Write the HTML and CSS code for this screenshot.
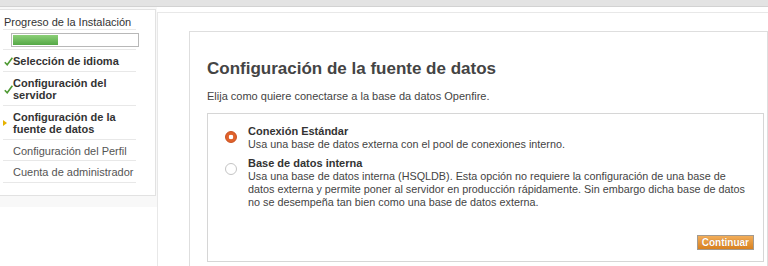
FILE: index.html
```html
<!DOCTYPE html>
<html lang="es">
<head>
    <meta charset="UTF-8">
    <meta name="viewport" content="width=device-width, initial-scale=1.0">
    <title>Openfire - Configuración</title>
    <link rel="stylesheet" href="styles.css">
</head>
<body>
    <div class="topbar"></div>

    <div class="layout">
        <div class="sidebar-wrap">
            <div class="sidebar">
                <h2 class="progress-title">Progreso de la Instalación</h2>
                <div class="progress-row">
                    <div class="progress"><div class="progress-fill" style="width: 36%"></div></div>
                </div>
                <ul class="steps">
                    <li class="step done">
                        <span class="step-icon"><svg width="9" height="9" viewBox="0 0 9 9"><path d="M0.8 5.2 L3.2 7.8 L8.4 0.8" fill="none" stroke="#4f9a34" stroke-width="1.6"/></svg></span>
                        <span>Selección de idioma</span>
                    </li>
                    <li class="step done">
                        <span class="step-icon"><svg width="9" height="9" viewBox="0 0 9 9"><path d="M0.8 5.2 L3.2 7.8 L8.4 0.8" fill="none" stroke="#4f9a34" stroke-width="1.6"/></svg></span>
                        <span>Configuración del servidor</span>
                    </li>
                    <li class="step current">
                        <span class="step-icon"><span class="arrow"></span></span>
                        <span>Configuración de la fuente de datos</span>
                    </li>
                    <li class="step">
                        <span class="step-icon"></span>
                        <span>Configuración del Perfil</span>
                    </li>
                    <li class="step">
                        <span class="step-icon"></span>
                        <span>Cuenta de administrador</span>
                    </li>
                </ul>
            </div>
        </div>

        <div class="main">
            <div class="panel">
                <h1>Configuración de la fuente de datos</h1>
                <p class="intro">Elija como quiere conectarse a la base da datos Openfire.</p>

                <form class="options" onsubmit="return false">
                    <label class="option">
                        <input type="radio" name="mode" value="standard" checked>
                        <span class="option-text">
                            <strong>Conexión Estándar</strong>
                            <span class="option-desc">Usa una base de datos externa con el pool de conexiones interno.</span>
                        </span>
                    </label>
                    <label class="option">
                        <input type="radio" name="mode" value="embedded">
                        <span class="option-text">
                            <strong>Base de datos interna</strong>
                            <span class="option-desc">Usa una base de datos interna (HSQLDB). Esta opción no requiere la configuración de una base de<br>
                            datos externa y permite poner al servidor en producción rápidamente. Sin embargo dicha base de datos<br>
                            no se desempeña tan bien como una base de datos externa.</span>
                        </span>
                    </label>
                    <div class="actions">
                        <button type="submit">Continuar</button>
                    </div>
                </form>
            </div>
        </div>
    </div>
</body>
</html>
```

FILE: styles.css
```css
html, body {
    overflow: hidden;
}

body {
    margin: 0;
    font-family: "Liberation Sans", Arial, sans-serif;
    font-size: 11px;
    color: #444;
    background: #fff;
}

.topbar {
    height: 6px;
    background: #e3e3e3;
    border-bottom: 1px solid #d2d2d2;
}

.layout {
    display: flex;
    align-items: flex-start;
}

/* sidebar */
.sidebar-wrap {
    width: 157px;
    flex-shrink: 0;
    box-sizing: border-box;
    padding: 2px 1px 11px 0;
    background: #f8f8f8;
}

.sidebar {
    background: #fff;
    border: 1px solid #e2e2e2;
    border-left: none;
    padding: 6px 19px 12px 3px;
}

.progress-title {
    margin: 0;
    padding-left: 1px;
    font-size: 11px;
    font-weight: normal;
    line-height: 13px;
    color: #333;
    border-bottom: 1px solid #e8e8e8;
}

.progress-row {
    padding: 3px 0 2px 8px;
    border-bottom: 1px solid #e8e8e8;
}

.progress {
    width: 128px;
    height: 14px;
    box-sizing: border-box;
    border: 1px solid #b8b8b8;
    background: #fff;
    padding: 1px;
}

.progress-fill {
    height: 100%;
    background: linear-gradient(#8ccf78, #54a846);
}

.steps {
    list-style: none;
    margin: 0;
    padding: 0;
}

.step {
    display: flex;
    align-items: center;
    padding: 5px 0 3px;
    line-height: 12.5px;
    color: #555;
    border-bottom: 1px solid #e8e8e8;
}

.step.done,
.step.current {
    font-weight: bold;
    color: #333;
}

.step-icon {
    width: 10px;
    flex-shrink: 0;
    display: flex;
    align-items: center;
}

.step-icon svg {
    margin-left: 1px;
}

.arrow {
    width: 0;
    height: 0;
    border-left: 4px solid #e6b200;
    border-top: 3px solid transparent;
    border-bottom: 3px solid transparent;
}

/* main panel */
.main {
    flex: 1;
    margin-top: 5px;
    border-top: 1px solid #e8e8e8;
    border-left: 1px solid #e8e8e8;
    padding: 18px 0 0 31px;
}

.panel {
    border: 1px solid #dedede;
    padding: 27px 3px 0 17px;
    min-height: 300px;
}

.panel h1 {
    margin: 0;
    font-size: 17px;
    line-height: 20px;
    color: #444;
}

.intro {
    margin: 11px 0 10px;
    line-height: 13px;
}

.options {
    height: 149px;
    box-sizing: border-box;
    border: 1px solid #d6d6d6;
    padding: 11px 9px 11px 17px;
    display: flex;
    flex-direction: column;
}

.option {
    display: flex;
    align-items: flex-start;
}

.option + .option {
    margin-top: 6px;
}

.option input {
    appearance: none;
    -webkit-appearance: none;
    width: 12px;
    height: 12px;
    margin: 6px 11px 0 0;
    flex-shrink: 0;
    box-sizing: border-box;
    border: 1px solid #c4c4c4;
    border-radius: 50%;
    background: #fff;
}

.option input:checked {
    border-color: #c9501f;
    background: radial-gradient(circle, #fff 0, #fff 2px, #e0622c 2.6px);
}

.option-text {
    display: flex;
    flex-direction: column;
    line-height: 13px;
}

.option-text strong {
    color: #333;
}

.option-desc {
    font-size: 10.8px;
}

.actions {
    margin-top: auto;
    display: flex;
    justify-content: flex-end;
}

.actions button {
    height: 15px;
    padding: 0 4px;
    border: 1px solid #a29a90;
    background: linear-gradient(#f2ad5a, #d8811f);
    color: #fff;
    font-family: "Liberation Sans", Arial, sans-serif;
    font-size: 10px;
    font-weight: bold;
    line-height: 13px;
    text-shadow: 0 0 1px #b86a18;
    cursor: pointer;
}
```
